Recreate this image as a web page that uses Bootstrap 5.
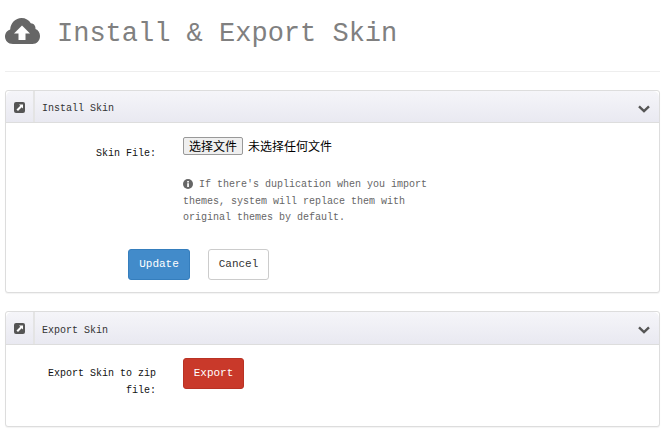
<!DOCTYPE html>
<html lang="en">
<head>
  <meta charset="UTF-8">
  <meta name="viewport" content="width=device-width, initial-scale=1.0">
  <title>Install &amp; Export Skin</title>
  <link rel="stylesheet" href="https://cdn.jsdelivr.net/npm/bootstrap@5.3.0/dist/css/bootstrap.min.css">
  <style>
    body { background: #fff; font-family: "Liberation Mono", "Noto Sans CJK SC", monospace; font-size: 10px; color: #222; overflow: hidden; }
    .page-wrap { padding: 0 9px 0 5px; }
    .page-head { height: 72px; border-bottom: 1px solid #eee; margin-bottom: 18px; padding-top: 18px; gap: 17px; }
    .page-head h1 { margin: 0; font-family: "Liberation Mono", monospace; font-size: 27px; line-height: 32px; color: #808080; font-weight: 400; }
    .skin-panel { border: 1px solid #ddd; border-radius: 3px; box-shadow: 0 1px 1px rgba(0,0,0,.05); margin-bottom: 18px; }
    .skin-panel-head { height: 32px; padding: 0; background: linear-gradient(#f5f5f9, #e9e9f1); border-bottom: 1px solid #ddd; }
    .skin-panel-head.tall { height: 33px; }
    .head-icon { width: 29px; border-right: 2px solid #e4e4e4; padding-top: 1px; }
    .head-title { padding: 4px 0 0 7px; font-size: 10px; color: #333; }
    .head-chevron { margin-right: 9px; padding-top: 4px; }
    .form-line { display: flex; }
    .form-label-cell { width: 150px; padding-left: 20px; text-align: right; line-height: 17px; color: #111; flex-shrink: 0; }
    .form-value-cell { margin-left: 27px; }
    .file-btn { font-family: "Noto Sans CJK SC", sans-serif; font-size: 12px; line-height: 16px; height: 18px; width: 60px; padding: 0; border: 1px solid #999; border-radius: 2px; background: #efefef; color: #000; vertical-align: top; }
    .file-text { font-family: "Noto Sans CJK SC", sans-serif; font-size: 12px; line-height: 18px; color: #000; margin-left: 5px; vertical-align: top; }
    .help-note { width: 260px; margin: 22px 0 0; color: #666; line-height: 16.500px; }
    .skin-btn { width: 61px; height: 31px; padding: 0; font-size: 11px; border-radius: 3px; }
    .btn-update { width: 62px; background: #428bca; border-color: #357ebd; color: #fff; }
    .btn-cancel { background: #fff; border-color: #ccc; color: #333; }
    .btn-export { background: #c9392a; border-color: #b93224; color: #fff; }
    .install-body { height: 169px; padding-top: 14px; }
    .install-actions { margin: 22px 0 0 122px; gap: 18px; }
    .export-body { height: 81px; padding-top: 13px; }
    .export-body .form-label-cell { padding-top: 7px; }
  </style>
</head>
<body>
  <div class="page-wrap">
    <div class="page-head d-flex align-items-start">
      <svg width="35" height="26" viewBox="0 0 35 26"><path fill="#666" d="M8 26C3 26 0 22.500 0 18.500 0 15 2.200 12.300 5.200 11.400 5.500 5 10.500 0 16.500 0 20.500 0 24 2 25.800 5.300 29 5.500 30.700 8 30.500 11 33.300 12 35 14.800 35 18 35 22.500 31.800 26 27.500 26Z"/><path fill="#fff" d="M17 7.500 25 15.500H20.500V22H13.500V15.500H9Z"/></svg>
      <h1>Install &amp; Export Skin</h1>
    </div>

    <!-- Install -->
    <div class="card skin-panel">
      <div class="skin-panel-head d-flex align-items-stretch rounded-top">
        <div class="head-icon d-flex align-items-center justify-content-center">
          <svg width="11" height="11" viewBox="0 0 11 11"><rect width="11" height="11" rx="2" fill="#555"/><path fill="#fff" d="M5 2.500H9V6.500L7.700 5.200 4 9 2.500 7.500 6.300 3.800Z"/></svg>
        </div>
        <div class="head-title flex-grow-1 d-flex align-items-center">Install Skin</div>
        <div class="head-chevron d-flex align-items-center">
          <svg width="12" height="8" viewBox="0 0 12 8"><path fill="none" stroke="#555" stroke-width="2.400" d="M1 1.300 6 6 11 1.300"/></svg>
        </div>
      </div>
      <div class="install-body">
        <div class="form-line">
          <div class="form-label-cell pt-1 mt-1">Skin File:</div>
          <div class="form-value-cell">
            <button type="button" class="file-btn">选择文件</button><span class="file-text">未选择任何文件</span>
            <p class="help-note"><svg width="10" height="10" viewBox="0 0 10 10"><circle cx="5" cy="5" r="5" fill="#666"/><rect x="4.200" y="4.200" width="1.700" height="3.800" fill="#fff"/><rect x="4.200" y="2" width="1.700" height="1.500" fill="#fff"/></svg> If there's duplication when you import themes, system will replace them with original themes by default.</p>
          </div>
        </div>
        <div class="install-actions d-flex">
          <button type="button" class="btn skin-btn btn-update">Update</button>
          <button type="button" class="btn skin-btn btn-cancel">Cancel</button>
        </div>
      </div>
    </div>

    <!-- Export -->
    <div class="card skin-panel">
      <div class="skin-panel-head tall d-flex align-items-stretch rounded-top">
        <div class="head-icon d-flex align-items-center justify-content-center">
          <svg width="11" height="11" viewBox="0 0 11 11"><rect width="11" height="11" rx="2" fill="#555"/><path fill="#fff" d="M5 2.500H9V6.500L7.700 5.200 4 9 2.500 7.500 6.300 3.800Z"/></svg>
        </div>
        <div class="head-title flex-grow-1 d-flex align-items-center">Export Skin</div>
        <div class="head-chevron d-flex align-items-center">
          <svg width="12" height="8" viewBox="0 0 12 8"><path fill="none" stroke="#555" stroke-width="2.400" d="M1 1.300 6 6 11 1.300"/></svg>
        </div>
      </div>
      <div class="export-body">
        <div class="form-line">
          <div class="form-label-cell">Export Skin to zip file:</div>
          <div class="form-value-cell">
            <button type="button" class="btn skin-btn btn-export">Export</button>
          </div>
        </div>
      </div>
    </div>
  </div>
  <script src="https://cdn.jsdelivr.net/npm/bootstrap@5.3.0/dist/js/bootstrap.bundle.min.js"></script>
</body>
</html>
